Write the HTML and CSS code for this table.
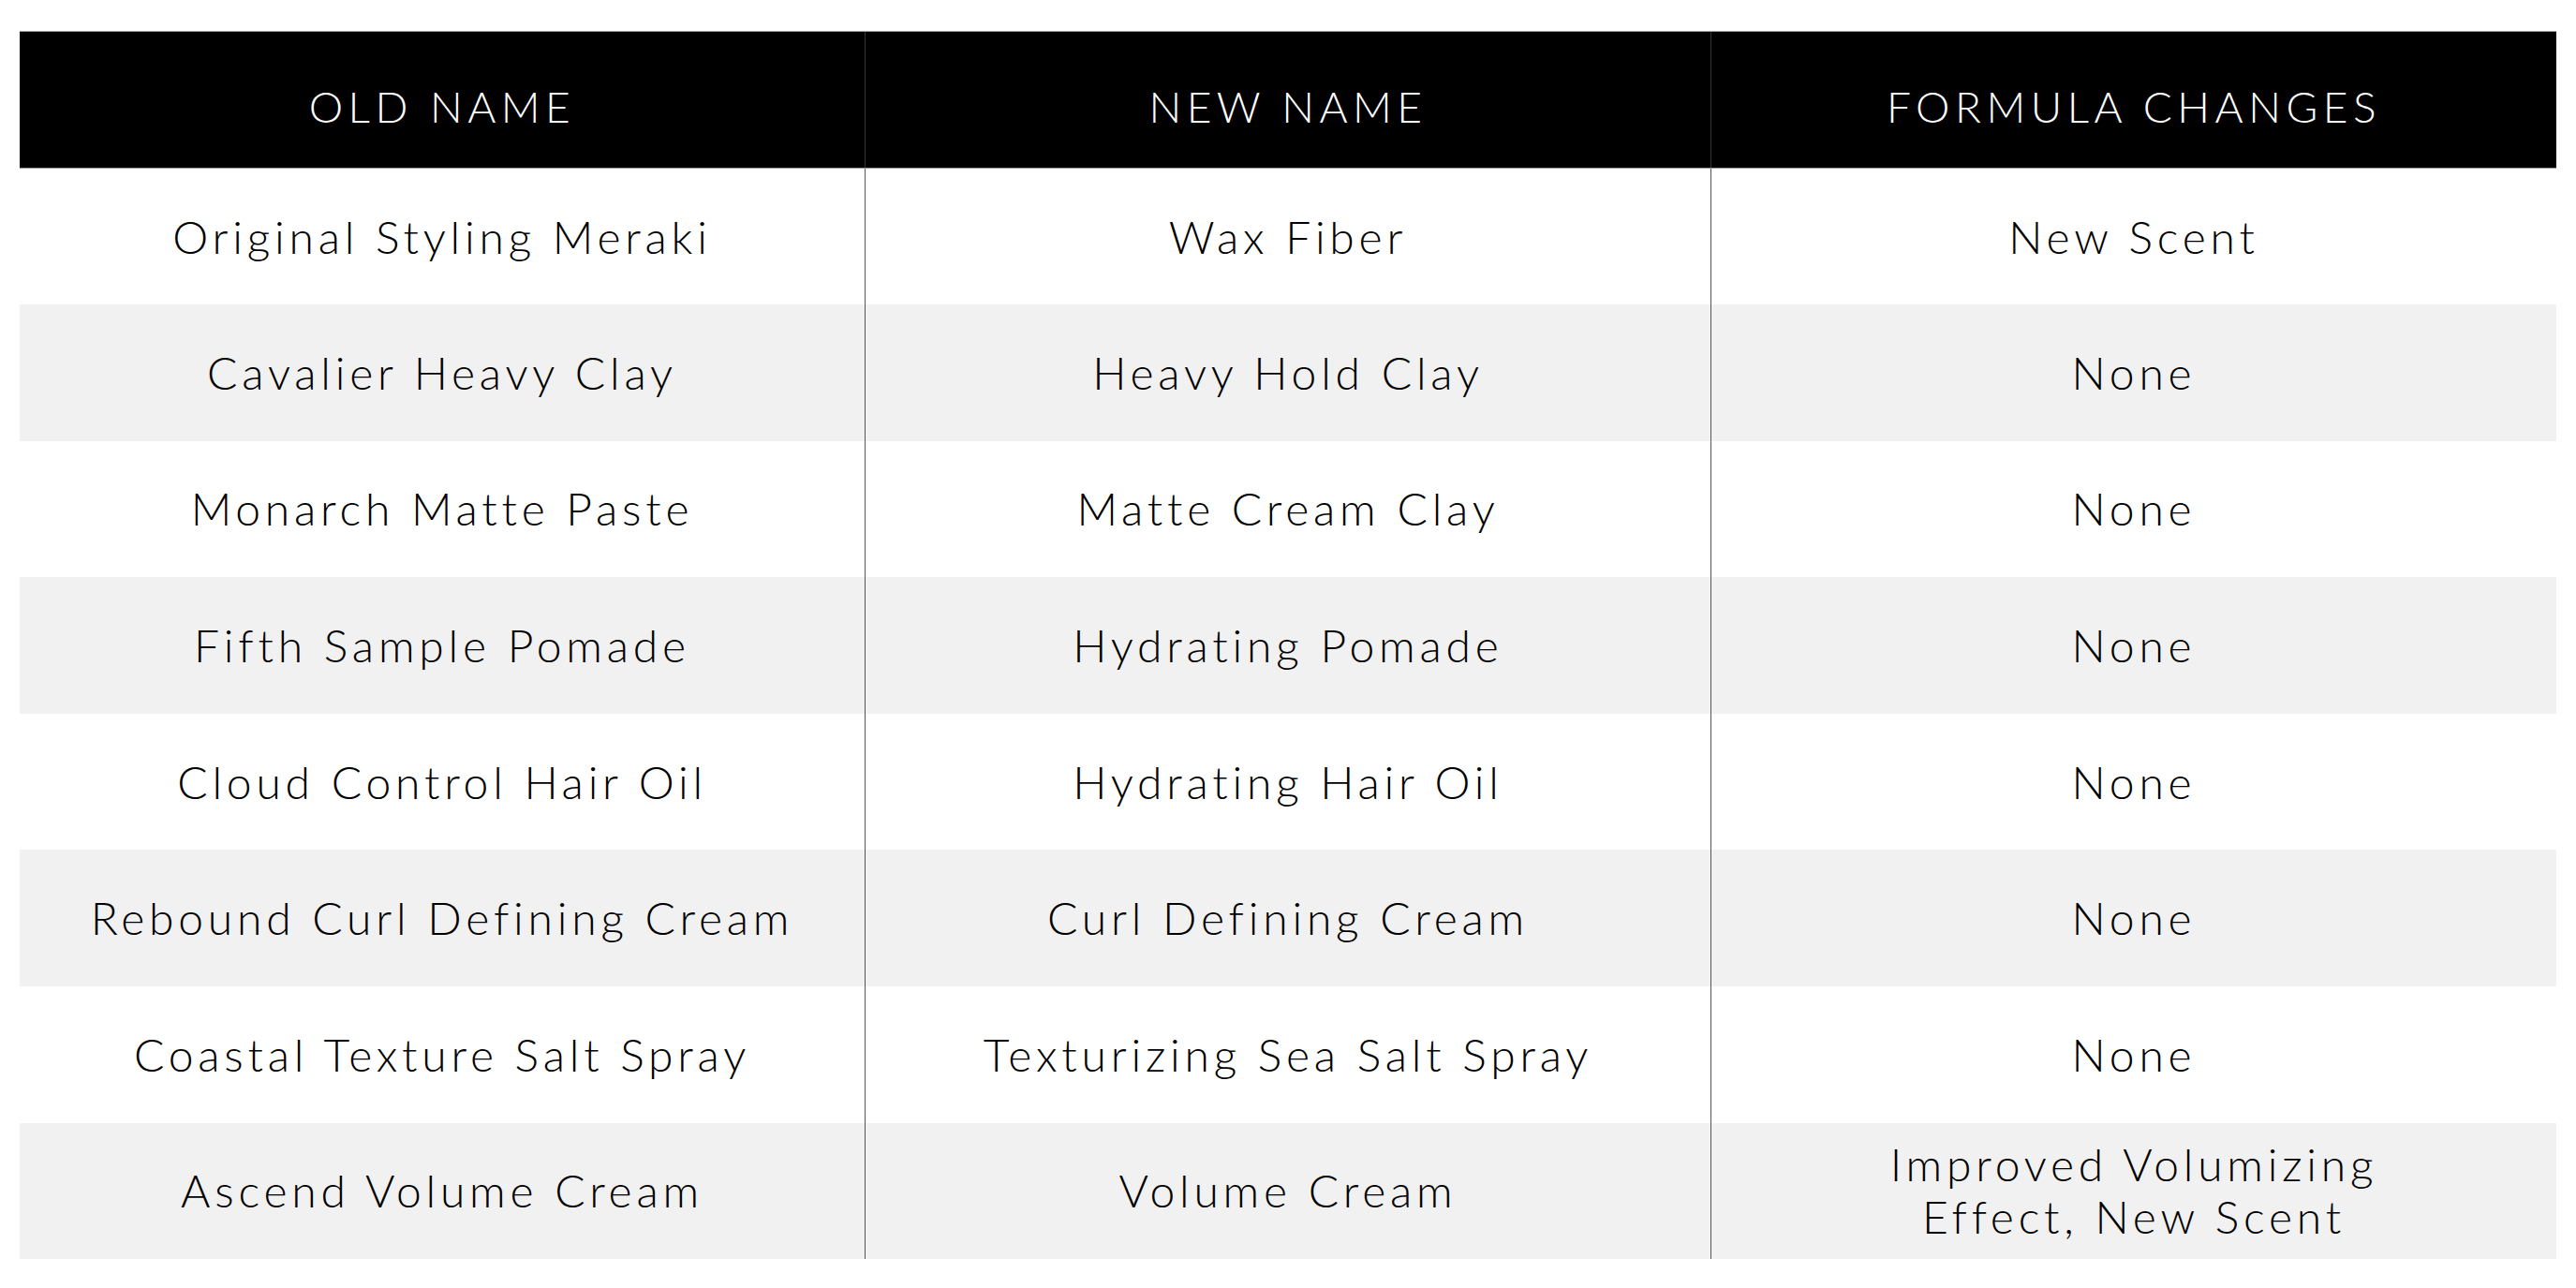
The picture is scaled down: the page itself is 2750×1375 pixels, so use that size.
FILE: index.html
```html
<!DOCTYPE html>
<html lang="en">
<head>
<meta charset="utf-8">
<title>Product Name Changes</title>
<link rel="stylesheet" href="styles.css">
</head>
<body>
<div class="page">
<table class="names">
  <thead>
    <tr>
      <th>OLD NAME</th>
      <th>NEW NAME</th>
      <th>FORMULA CHANGES</th>
    </tr>
  </thead>
  <tbody>
    <tr><td>Original Styling Meraki</td><td>Wax Fiber</td><td>New Scent</td></tr>
    <tr><td>Cavalier Heavy Clay</td><td>Heavy Hold Clay</td><td>None</td></tr>
    <tr><td>Monarch Matte Paste</td><td>Matte Cream Clay</td><td>None</td></tr>
    <tr><td>Fifth Sample Pomade</td><td>Hydrating Pomade</td><td>None</td></tr>
    <tr><td>Cloud Control Hair Oil</td><td>Hydrating Hair Oil</td><td>None</td></tr>
    <tr><td>Rebound Curl Defining Cream</td><td>Curl Defining Cream</td><td>None</td></tr>
    <tr><td>Coastal Texture Salt Spray</td><td>Texturizing Sea Salt Spray</td><td>None</td></tr>
    <tr><td>Ascend Volume Cream</td><td>Volume Cream</td><td>Improved Volumizing<br>Effect, New Scent</td></tr>
  </tbody>
</table>
</div>
</body>
</html>
```
FILE: styles.css
```css
html, body {
  margin: 0;
  padding: 0;
  background: #ffffff;
}
.page {
  padding: 33px 21px 0 21px;
}
.names {
  width: 2708px;
  border-collapse: collapse;
  table-layout: fixed;
  font-family: "Lato", "Liberation Sans", sans-serif;
  font-weight: 300;
  font-size: 48px;
  letter-spacing: 0.1em;
  color: #000000;
}
.names th,
.names td {
  width: 33.333%;
  text-align: center;
  vertical-align: middle;
  padding: 0;
  line-height: 56px;
}
.names th + th,
.names td + td {
  border-left: 1px solid #555555;
}
.names thead tr {
  height: 146px;
  background: #000000;
}
.names th {
  color: #ffffff;
  font-weight: 300;
  font-size: 46px;
  letter-spacing: 0.12em;
  padding-top: 14px;
  border-top: 1px solid #9a9a9a;
  border-bottom: 1px solid #9a9a9a;
}
.names th + th {
  border-left: 1px solid #333333;
}
.names tbody tr {
  height: 145.6px;
}
.names tbody tr:nth-child(even) {
  background: #f1f1f1;
}
```
